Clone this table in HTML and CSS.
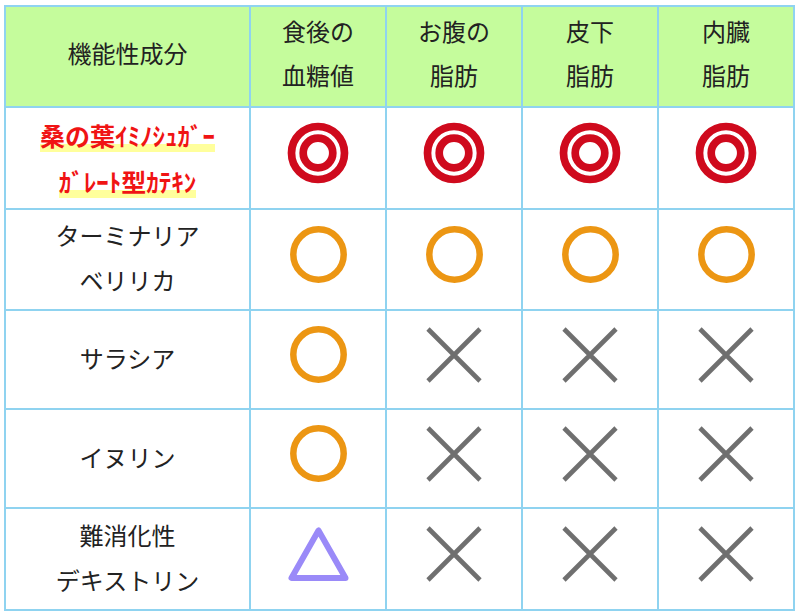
FILE: index.html
```html
<!DOCTYPE html>
<html lang="ja">
<head>
<meta charset="utf-8">
<title>機能性成分 比較表</title>
<link rel="stylesheet" href="styles.css">
</head>
<body>
<svg class="defs" width="0" height="0" aria-hidden="true">
  <defs>
    <symbol id="dbl" viewBox="0 0 62 62">
      <circle cx="31" cy="31" r="26.5" fill="none" stroke="#cf0a1d" stroke-width="7.7"/>
      <circle cx="31" cy="31" r="14.8" fill="none" stroke="#cf0a1d" stroke-width="7.7"/>
    </symbol>
    <symbol id="cir" viewBox="0 0 57 57">
      <circle cx="28.5" cy="28.5" r="25.2" fill="none" stroke="#ec9613" stroke-width="6.5"/>
    </symbol>
    <symbol id="crs" viewBox="0 0 56 56">
      <path d="M2 2L54 54M54 2L2 54" fill="none" stroke="#6f6f6f" stroke-width="4.6"/>
    </symbol>
    <symbol id="tri" viewBox="0 0 61 55">
      <polygon points="30.5,3.5 3.5,51 57.5,51" fill="none" stroke="#9a8af8" stroke-width="6" stroke-linejoin="round"/>
    </symbol>
  </defs>
</svg>
<table class="chart">
  <colgroup>
    <col class="c-name"><col class="c-val"><col class="c-val"><col class="c-val"><col class="c-val">
  </colgroup>
  <thead>
    <tr class="r-head">
      <th>機能性成分</th>
      <th>食後の<br>血糖値</th>
      <th>お腹の<br>脂肪</th>
      <th>皮下<br>脂肪</th>
      <th>内臓<br>脂肪</th>
    </tr>
  </thead>
  <tbody>
    <tr class="r-100">
      <td><span class="hl">桑の葉ｲﾐﾉｼｭｶﾞｰ<br>ｶﾞﾚｰﾄ型ｶﾃｷﾝ</span></td>
      <td><svg class="mark dbl"><use href="#dbl"/></svg></td>
      <td><svg class="mark dbl"><use href="#dbl"/></svg></td>
      <td><svg class="mark dbl"><use href="#dbl"/></svg></td>
      <td><svg class="mark dbl"><use href="#dbl"/></svg></td>
    </tr>
    <tr class="r-99">
      <td class="txt">ターミナリア<br>ベリリカ</td>
      <td><svg class="mark cir"><use href="#cir"/></svg></td>
      <td><svg class="mark cir"><use href="#cir"/></svg></td>
      <td><svg class="mark cir"><use href="#cir"/></svg></td>
      <td><svg class="mark cir"><use href="#cir"/></svg></td>
    </tr>
    <tr class="r-97">
      <td class="txt">サラシア</td>
      <td><svg class="mark cir"><use href="#cir"/></svg></td>
      <td><svg class="mark crs"><use href="#crs"/></svg></td>
      <td><svg class="mark crs"><use href="#crs"/></svg></td>
      <td><svg class="mark crs"><use href="#crs"/></svg></td>
    </tr>
    <tr class="r-97">
      <td class="txt">イヌリン</td>
      <td><svg class="mark cir"><use href="#cir"/></svg></td>
      <td><svg class="mark crs"><use href="#crs"/></svg></td>
      <td><svg class="mark crs"><use href="#crs"/></svg></td>
      <td><svg class="mark crs"><use href="#crs"/></svg></td>
    </tr>
    <tr class="r-100">
      <td class="txt">難消化性<br>デキストリン</td>
      <td><svg class="mark tri"><use href="#tri"/></svg></td>
      <td><svg class="mark crs"><use href="#crs"/></svg></td>
      <td><svg class="mark crs"><use href="#crs"/></svg></td>
      <td><svg class="mark crs"><use href="#crs"/></svg></td>
    </tr>
  </tbody>
</table>
</body>
</html>
```
FILE: styles.css
```css
html, body {
  margin: 0;
}
body {
  padding: 5px 4px;
  background: #fff;
  font-family: "Noto Sans CJK JP", "Noto Sans", sans-serif;
  color: #222;
}
.defs {
  position: absolute;
  width: 0;
  height: 0;
  overflow: hidden;
}
.chart {
  border-collapse: separate;
  border-spacing: 2px;
  background: #8fd3f0;
  table-layout: fixed;
  width: 791px;
}
.c-name { width: 243px; }
.c-val { width: 134px; }
.chart th,
.chart td {
  padding: 0;
  text-align: center;
  vertical-align: middle;
  background: #fff;
  font-size: 24px;
  line-height: 45px;
  font-weight: 400;
}
.chart thead th {
  background: #c5fc9c;
  line-height: 44px;
  padding-bottom: 8px;
}
.chart td.txt {
  padding-bottom: 5px;
}
.r-head { height: 99px; }
.r-100 { height: 100px; }
.r-99 { height: 99px; }
.r-97 { height: 97px; }

.hl {
  color: #f01414;
  font-weight: 700;
  font-size: 25px;
  line-height: 46px;
  background: linear-gradient(transparent 74%, #ffff9c 74%, #ffff9c 97%, transparent 97%);
}

.mark {
  display: block;
  margin: 0 auto 10px;
}
.dbl { width: 62px; height: 62px; }
.cir { width: 57px; height: 57px; }
.crs { width: 56px; height: 56px; }
.tri { width: 61px; height: 55px; }
```
